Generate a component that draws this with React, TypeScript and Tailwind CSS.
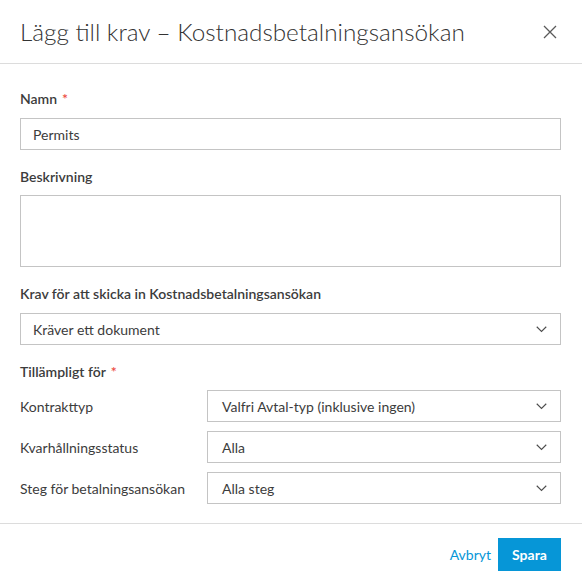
const font = { fontFamily: "Lato, 'Noto Sans', sans-serif" };

const Chevron = () => (
  <svg width="11" height="7" viewBox="0 0 11 7" fill="none" className="shrink-0">
    <path d="M0.75 0.75L5.5 5.5L10.25 0.75" stroke="#4d4d4d" strokeWidth="1.1" />
  </svg>
);

const CloseIcon = () => (
  <svg width="14" height="14" viewBox="0 0 14 14" fill="none">
    <path d="M1 1L13 13M13 1L1 13" stroke="#5a5a5a" strokeWidth="1.3" />
  </svg>
);

const SelectBox = ({ value, pad = "pl-3" }: { value: string; pad?: string }) => (
  <div className={`flex h-[32px] items-center justify-between border border-[#c4c4c4] bg-white ${pad} pr-[13px]`}>
    <span className="text-[14px] text-[#3c3c3c]">{value}</span>
    <Chevron />
  </div>
);

const Label = ({ children, required }: { children: React.ReactNode; required?: boolean }) => (
  <div className="text-[14px] leading-[18px] font-semibold text-[#3c3c3c]">
    {children}
    {required && <span className="ml-[5px] text-[#ec4a41]">*</span>}
  </div>
);

const rows = [
  { label: "Kontrakttyp", value: "Valfri Avtal-typ (inklusive ingen)" },
  { label: "Kvarhållningsstatus", value: "Alla" },
  { label: "Steg för betalningsansökan", value: "Alla steg" },
];

export default function App() {
  return (
    <div style={font} className="flex h-[583px] w-[582px] flex-col bg-white text-[#3c3c3c]">
      {/* header */}
      <div className="flex h-[64px] shrink-0 items-center justify-between border-b border-[#dcdcdc] pl-[20px] pr-[25px]">
        <h1 className="text-[24.3px] leading-[28px] font-light text-[#333333]">
          Lägg till krav – Kostnadsbetalningsansökan
        </h1>
        <CloseIcon />
      </div>

      {/* form */}
      <div className="flex flex-col pl-5 pr-[21px] pt-[26px] pb-[19px]">
        <Label required>Namn</Label>
        <div className="mt-[10px] flex h-[32px] items-center border border-[#c4c4c4] pl-3 text-[14px]">
          Permits
        </div>

        <div className="mt-[18px]">
          <Label>Beskrivning</Label>
        </div>
        <div className="mt-[9px] h-[72px] border border-[#c4c4c4]" />

        <div className="mt-[18px]">
          <Label>Krav för att skicka in Kostnadsbetalningsansökan</Label>
        </div>
        <div className="mt-[10px]">
          <SelectBox value="Kräver ett dokument" />
        </div>

        <div className="mt-[18px]">
          <Label required>Tillämpligt för</Label>
        </div>
        <div className="mt-[9px] flex flex-col gap-[9px]">
          {rows.map((r) => (
            <div key={r.label} className="grid grid-cols-[187px_1fr] items-center">
              <span className="text-[14px]">{r.label}</span>
              <SelectBox value={r.value} pad="pl-[14px]" />
            </div>
          ))}
        </div>
      </div>

      {/* footer */}
      <div className="flex items-start justify-end border-t border-[#dcdcdc] pl-5 pr-[21px] pt-[14px]">
        <button className="mr-[7px] flex h-[33px] items-center text-[14px] text-[#0696d7]">Avbryt</button>
        <button className="h-[33px] w-[63px] bg-[#0696d7] text-[14px] font-bold text-white">Spara</button>
      </div>
    </div>
  );
}
